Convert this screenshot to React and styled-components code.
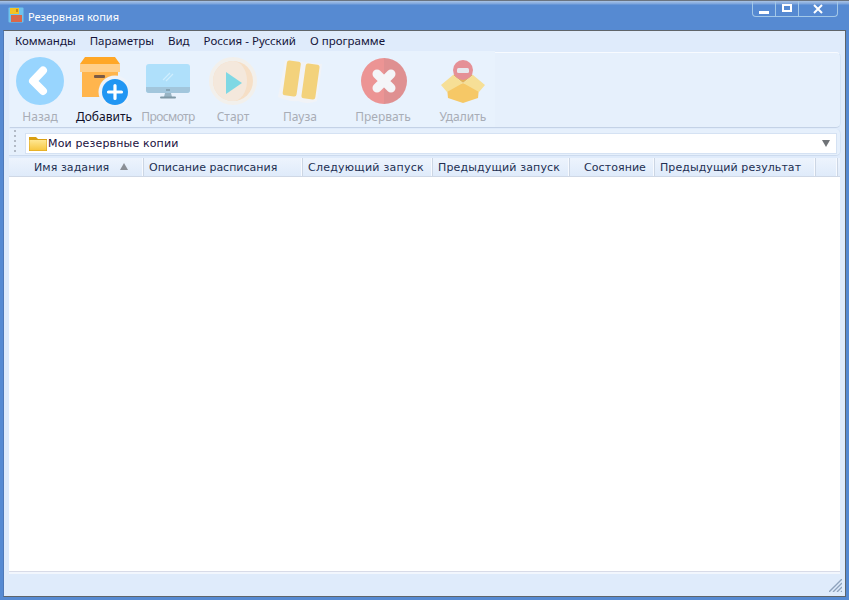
import React from "react";
import styled, { createGlobalStyle } from "styled-components";

const Global = createGlobalStyle`
  html, body { margin: 0; padding: 0; background: #568ad2; }
  #root { width: 849px; height: 600px; }
  * { box-sizing: border-box; }
`;

const Win = styled.div`
  width: 849px;
  height: 600px;
  display: flex;
  flex-direction: column;
  background: #568ad2;
  border-top: 1px solid #6b7480;
  overflow: hidden;
`;
const TitleBar = styled.div`
  height: 29px;
  flex: none;
  display: flex;
  align-items: flex-start;
  padding: 6px 11px 0 8px;
  gap: 4px;
  background: linear-gradient(#a9c3e6 0, #7ba4dc 3px, #568ad2 4px);
`;
const TitleText = styled.span`
  font: 11px "Noto Sans", sans-serif;
  color: #fff;
  line-height: 20px;
  flex: 1;
`;
const WinButtons = styled.div`
  display: flex;
  height: 16px;
  margin-top: -6px;
  border: 1px solid #a3c8e8;
  border-top: none;
  border-radius: 0 0 4px 4px;
`;
const WinBtn = styled.div`
  width: ${(p) => p.$w}px;
  display: flex;
  align-items: center;
  justify-content: center;
  border-left: ${(p) => (p.$first ? "none" : "1px solid #a3c8e8")};
`;
const Body = styled.div`
  flex: 1;
  margin: 0 3px 3px 3px;
  background: #dfebfb;
  border: 1px solid #5f6469;
  border-left-color: #4f79b8;
  display: flex;
  flex-direction: column;
  min-height: 0;
`;
const Menu = styled.div`
  height: 20px;
  flex: none;
  display: flex;
  padding-left: 4px;
  align-items: center;
`;
const MenuItem = styled.span`
  font: 11.5px "Noto Sans", sans-serif;
  color: #14143a;
  padding: 0 7px;
  line-height: 20px;
  white-space: nowrap;
`;
const Toolbar = styled.div`
  height: 76px;
  flex: none;
  margin: 1px 4px 0 5px;
  display: flex;
  background: #e6f0fc;
  border: 1px solid #e6f0fc;
  border-top-color: #f8fbff;
  border-right-color: #d3e2f4;
  border-bottom-color: #c4d2e6;
  border-radius: 0 5px 5px 0;
`;
const ToolGroup = styled.div`
  display: flex;
  margin: -2px 0 0 0;
  padding: 1px 4px 0 1px;
  height: 76px;
  background: #e8f2fd;
`;
const ToolBtn = styled.div`
  width: ${(p) => p.$w}px;
  display: flex;
  flex-direction: column;
  align-items: center;
  flex: none;
`;
const IconSlot = styled.div`
  height: 56px;
  padding-top: ${(p) => p.$top || 0}px;
  margin-top: 4px;
  margin-bottom: -4px;
  display: flex;
  align-items: flex-start;
  justify-content: center;
`;
const ToolLabel = styled.span`
  font: 12px/20px "Noto Sans", sans-serif;
  letter-spacing: ${(p) => p.$ls || 0}px;
  color: ${(p) => (p.$on ? "#10102a" : "#a8adb6")};
  white-space: nowrap;
  padding-top: 1px;
`;
const AddressRow = styled.div`
  height: 27px;
  flex: none;
  margin: 1px 4px 0 5px;
  display: flex;
  align-items: flex-start;
  padding: 4px 3px 0 5px;
  background: #e6f0fc;
  border-bottom: 1px solid #cddbee;
  border-right: 1px solid #d3e2f4;
  border-radius: 0 5px 5px 0;
`;
const Gripper = styled.div`
  width: 2px;
  height: 24px;
  margin: -3px 9px 0 0;
  background: repeating-linear-gradient(#b2bac6 0 2px, transparent 2px 5px);
`;
const Combo = styled.div`
  flex: 1;
  height: 21px;
  background: #fff;
  border: 1px solid #d5e2f3;
  display: flex;
  align-items: center;
  padding: 0 6px 0 3px;
`;
const ComboText = styled.span`
  font: 11px "DejaVu Sans", sans-serif;
  letter-spacing: 0.15px;
  color: #1a1040;
  flex: 1;
  padding-left: 1px;
`;
const TableWrap = styled.div`
  flex: 1;
  margin: 2px 5px 0 5px;
  background: #fff;
  border-bottom: 1px solid #d8dbe8;
  min-height: 0;
  display: flex;
  flex-direction: column;
  box-shadow: 0 2px 0 #f2f6fd;
`;
const Header = styled.div`
  height: 19px;
  flex: none;
  display: flex;
  background: linear-gradient(#edf4fd, #dfebfa);
  border-bottom: 1px solid #cfd8e6;
`;
const HeadCell = styled.div`
  width: ${(p) => p.$w}px;
  flex: none;
  position: relative;
  padding-left: ${(p) => p.$pl}px;
  font: 11px/19px "DejaVu Sans", sans-serif;
  letter-spacing: ${(p) => p.$ls}px;
  color: #222f52;
  white-space: nowrap;
  border-right: 1px solid #ccd6e4;
  box-shadow: inset -1px 0 0 #f7faff;
`;
const SortMark = styled.span`
  position: absolute;
  left: 111px;
  top: 5px;
  width: 0;
  height: 0;
  border-left: 4px solid transparent;
  border-right: 4px solid transparent;
  border-bottom: 7px solid #8a8f96;
`;
const Status = styled.div`
  height: 22px;
  flex: none;
  margin-top: 2px;
  display: flex;
  justify-content: flex-end;
  align-items: flex-start;
  padding: 5px 3px 0 0;
`;

const Back = () => (
  <svg width="50" height="50" viewBox="0 0 50 50">
    <circle cx="25" cy="25" r="24" fill="#98d5fe" />
    <path d="M28 14.5 L18 25 L28 35" fill="none" stroke="#fff" strokeWidth="8" strokeLinecap="round" strokeLinejoin="round" />
  </svg>
);
const Add = () => (
  <svg width="48" height="50" viewBox="0 0 48 50">
    <path d="M5 1 H35 L40 8 V16 H0 V8 Z" fill="#ffa726" />
    <rect x="0" y="8" width="40" height="8" fill="#ffcf8a" />
    <rect x="2" y="16" width="36" height="25" fill="#ffb54d" />
    <rect x="14" y="19" width="11" height="3" rx="1" fill="#7a5a45" />
    <circle cx="35" cy="36" r="16.5" fill="#eef3fa" />
    <circle cx="35" cy="36" r="13" fill="#2196f3" />
    <path d="M35 29.5 V42.5 M28.5 36 H41.5" stroke="#fff" strokeWidth="3.2" strokeLinecap="round" />
  </svg>
);
const Monitor = () => (
  <svg width="44" height="35" viewBox="0 0 44 35">
    <rect x="0" y="0" width="44" height="29" rx="3" fill="#afe0fb" />
    <path d="M0 23 H44 V26 a3 3 0 0 1 -3 3 H3 a3 3 0 0 1 -3 -3 Z" fill="#a2c6dc" />
    <rect x="20" y="25" width="4" height="2" fill="#86a4b5" />
    <path d="M19 29 H25 L26 33 H18 Z" fill="#98b4c4" />
    <rect x="14" y="32.5" width="16" height="2" rx="1" fill="#7f98a6" />
    <path d="M17 16 L24 9 M20 17 L27 10" stroke="#cfeefe" strokeWidth="1.2" />
  </svg>
);
const Play = () => (
  <svg width="50" height="50" viewBox="0 0 50 50">
    <circle cx="25" cy="25" r="24" fill="#f2f0ec" />
    <circle cx="25" cy="25" r="20" fill="#f6dfc6" />
    <path d="M25 5 A20 20 0 0 0 25 45 A14 20 0 0 0 25 5 Z" fill="#f4e8dc" />
    <path d="M18 16 L34 27 L18 38 Z" fill="#7fd8e4" />
  </svg>
);
const Pause = () => (
  <svg width="46" height="46" viewBox="0 0 46 46">
    <path d="M1 37 Q12 42 21 41 Q30 45 40 41 L45 4 L8 0 Z" fill="#f1f3f7" />
    <rect x="7.75" y="1" width="14" height="35" rx="2.5" transform="rotate(8 14.75 18.5)" fill="#f3d27c" />
    <rect x="26.5" y="4" width="14" height="35" rx="2.5" transform="rotate(8 33.5 21.5)" fill="#f3d27c" />
  </svg>
);
const Stop = () => (
  <svg width="48" height="48" viewBox="-1 0 48 48">
    <path d="M24 1 a23 23 0 0 0 0 46 Z" fill="#ec9494" />
    <path d="M24 1 a23 23 0 0 1 0 46 Z" fill="#df9091" />
    <path d="M17 17 L31 31 M31 17 L17 31" stroke="#f4f5f8" strokeWidth="9" strokeLinecap="round" />
  </svg>
);
const Del = () => (
  <svg width="46" height="44" viewBox="0 0 46 44">
    <path d="M13 15 L23 11 L33 15 L23 23 Z" fill="#e3b25a" />
    <path d="M7 28 L23 23 L39 28 L38 38 L23 43 L8 38 Z" fill="#f6c866" />
    <path d="M1 25 L13 15 L23 23 L7 32 Z M45 25 L33 15 L23 23 L39 32 Z" fill="#f6df96" />
    <circle cx="23" cy="10" r="10" fill="#e59096" />
    <rect x="17" y="8" width="12" height="5" rx="1.5" fill="#e6e8ee" />
  </svg>
);
const Logo = () => (
  <svg width="16" height="16" viewBox="0 0 16 16">
    <rect x="0.5" y="0.5" width="15" height="15" rx="1" fill="#6fc3ec" />
    <rect x="2" y="1" width="9" height="6" fill="#f3c323" />
    <rect x="8" y="2" width="2" height="3" fill="#c98a1a" />
    <rect x="3" y="8" width="11" height="7" fill="#d9684a" />
  </svg>
);
const Folder = () => (
  <svg width="18" height="16" viewBox="0 0 18 16">
    <defs>
      <linearGradient id="folderFill" x1="0" y1="0" x2="0" y2="1">
        <stop offset="0" stopColor="#ffe792" />
        <stop offset="1" stopColor="#f7c63f" />
      </linearGradient>
    </defs>
    <path d="M0 1 H7 L9 3 H18 V15 H0 Z" fill="#d99f12" />
    <path d="M0.5 4 H17.5 V14.5 H0.5 Z" fill="url(#folderFill)" />
  </svg>
);

const tools = [
  { w: 58, label: "Назад", Icon: Back },
  { w: 70, label: "Добавить", Icon: Add, on: true },
  { w: 58, label: "Просмотр", Icon: Monitor, top: 8, ls: -0.6 },
  { w: 72, label: "Старт", Icon: Play },
  { w: 62, label: "Пауза", Icon: Pause, top: 4 },
  { w: 104, label: "Прервать", Icon: Stop, top: 1 },
  { w: 56, label: "Удалить", Icon: Del, top: 4 },
];

const cols = [
  { w: 135, pl: 25, t: "Имя задания", sort: true, ls: 0.07 },
  { w: 159, pl: 5, t: "Описание расписания", ls: 0 },
  { w: 130, pl: 5, t: "Следующий запуск", ls: 0.25 },
  { w: 137, pl: 5, t: "Предыдущий запуск", ls: 0.15 },
  { w: 85, pl: 14, t: "Состояние", ls: 0.07 },
  { w: 161, pl: 5, t: "Предыдущий результат", ls: 0.07 },
  { w: 22, pl: 0, t: "", ls: 0 },
];

export default function App() {
  return (
    <>
      <Global />
      <Win>
        <TitleBar>
          <Logo />
          <TitleText>Резервная копия</TitleText>
          <WinButtons>
            <WinBtn $w={22} $first>
              <svg width="10" height="12" viewBox="0 0 10 12"><rect y="8" width="10" height="3" fill="#fff" /></svg>
            </WinBtn>
            <WinBtn $w={23}>
              <svg width="10" height="10" viewBox="0 0 10 10"><rect x="1" y="1" width="8" height="6" fill="none" stroke="#fff" strokeWidth="2" /></svg>
            </WinBtn>
            <WinBtn $w={39}>
              <svg width="10" height="10" viewBox="0 0 10 10"><path d="M1 1 L9 9 M9 1 L1 9" stroke="#fff" strokeWidth="2" /></svg>
            </WinBtn>
          </WinButtons>
        </TitleBar>
        <Body>
          <Menu>
            {["Комманды", "Параметры", "Вид", "Россия - Русский", "О программе"].map((m) => (
              <MenuItem key={m}>{m}</MenuItem>
            ))}
          </Menu>
          <Toolbar>
            <ToolGroup>
              {tools.map(({ w, label, Icon, on, top, ls }) => (
                <ToolBtn key={label} $w={w}>
                  <IconSlot $top={top}>
                    <Icon />
                  </IconSlot>
                  <ToolLabel $on={on} $ls={ls}>{label}</ToolLabel>
                </ToolBtn>
              ))}
            </ToolGroup>
          </Toolbar>
          <AddressRow>
            <Gripper />
            <Combo>
              <Folder />
              <ComboText>Мои резервные копии</ComboText>
              <svg width="8" height="7" viewBox="0 0 8 7"><path d="M0 0 H8 L4 7 Z" fill="#6f7377" /></svg>
            </Combo>
          </AddressRow>
          <TableWrap>
            <Header>
              {cols.map((c) => (
                <HeadCell key={c.t} $w={c.w} $pl={c.pl} $ls={c.ls}>
                  {c.t}
                  {c.sort && <SortMark />}
                </HeadCell>
              ))}
            </Header>
          </TableWrap>
          <Status>
            <svg width="13" height="13" viewBox="0 0 13 13">
              <path d="M0 13 L13 0 M4 13 L13 4 M8 13 L13 8 M12 13 L13 12" stroke="#8fa3bd" strokeWidth="1.4" />
            </svg>
          </Status>
        </Body>
      </Win>
    </>
  );
}
